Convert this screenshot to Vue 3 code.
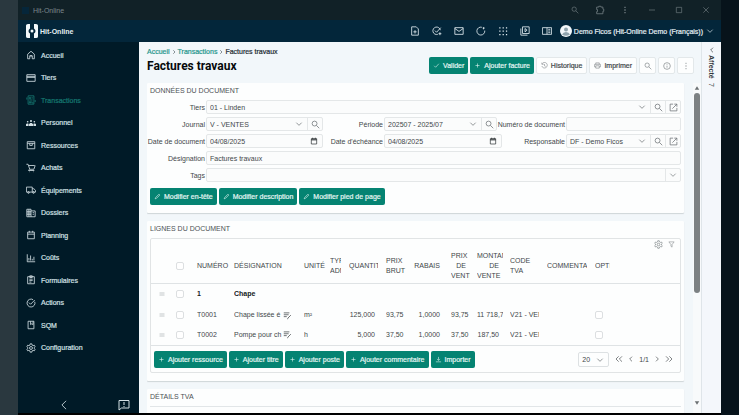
<script setup>
import { h, ref } from 'vue'

const icons = {
  home: 'M4 21V10l8-7 8 7v11h-5v-7H9v7zM9 14h6',
  card: 'M2 4h20v16H2zM2 8h20M2 10.500h20',
  receipt: 'M5 2h14v20H5zM8 6h3v3H8zM13 7h4M8 12h8M8 16h3v3H8zM14 15v4h4M2 6v5M22 12v5',
  box: 'M3 4h18v17H3zM3 8h18M9 8v5h6V8',
  cart: 'M1 3h4l4 12h10l3-9M7 6h14M8 15l-2 3h14M8 21h1M18 21h1',
  truck: 'M1 5h14v12H1zM15 9h4l4 4v4h-8M4 18a2 2 0 1 0 4 0a2 2 0 1 0-4 0M16 18a2 2 0 1 0 4 0a2 2 0 1 0-4 0',
  building: 'M2 3h10v18H2zM12 7h10v14H12M2 8h10M2 12h10M2 16h10M7 3v18M16 11h3M16 15h3',
  calendar: 'M4 5h16v16H4zM4 10h16M8 2v4M16 2v4',
  chart: 'M3 3v18h19M7 18v-6M11 18V6M15 18v-4M19 18V9',
  clipboard: 'M4 4h16v17H4zM9 2h6v4H9zM8 10h8M8 13h8M8 17h5',
  check: 'M21 9a9.500 9.500 0 1 1-4-5M7 11l4 4L21 5',
  book: 'M5 3h14v18H5zM11 3v8l3-2 3 2V3',
  gear: 'M10 2h4l.6 3 2.400 1.400 3-1 2 3.400-2.300 2v2.400l2.300 2-2 3.400-3-1-2.400 1.400-.6 3h-4l-.6-3L7 17.600l-3 1-2-3.400 2.300-2v-2.400L2 8.800l2-3.400 3 1L9.400 5zM8.500 12a3.500 3.500 0 1 0 7 0a3.500 3.500 0 1 0-7 0',
  left: 'M15 5l-7 7 7 7',
  right: 'M9 5l7 7-7 7',
  down: 'M4 8l8 8 8-8',
  back: 'M17 2L7 12l10 10',
  first: 'M11 4l-8 8 8 8M21 4l-8 8 8 8',
  last: 'M3 4l8 8-8 8M13 4l8 8-8 8',
  feedback: 'M2 3h20v15H7l-5 4zM12 6v6M12 14v2',
  search: 'M3 9.500a6.500 6.500 0 1 0 13 0a6.500 6.500 0 1 0-13 0M14.500 14.500L22 22',
  puzzle: 'M4 5h5V3h5v2h5v5h2v5h-2v6H4v-5h2v-5H4z',
  minimize: 'M3 12h18',
  maximize: 'M4 4h16v16H4z',
  close: 'M4 4l16 16M20 4L4 20',
  filePlus: 'M4 2h11l5 5v15H4zM12 10v8M8 14h8',
  taskPlus: 'M20 10a9 9 0 1 0-6 10M7 11l4 4L21 4M19 15v7M15.500 18.500h7',
  mail: 'M2 4h20v16H2zM2 6l10 7L22 6',
  refresh: 'M21 11a9.500 9.500 0 1 1-7-8M18 3v5M16 5h5',
  video: 'M6 2h16v16H6zM2 6v16h16M12 6l5 4-5 4z',
  reader: 'M1 4h22v16H1zM12 4v16M15 8h5M15 12h5M15 16h5',
  tick: 'M4 13l5 5L20 6',
  plus: 'M12 5v14M5 12h14',
  history: 'M4 6a9.500 9.500 0 1 1-1 8M3 2v6h6M12 7v6l4 2',
  printer: 'M6 8V3h12v5M6 17H2V8h20v9h-4M6 13h12v8H6z',
  info: 'M2 12a10 10 0 1 0 20 0a10 10 0 1 0-20 0M12 11v6M12 7v2',
  external: 'M11 3H3v18h18v-8M14 3h7v7M21 3L9 15',
  pencil: 'M4 20l2-5L17 4l3 3L9 18z',
  date: 'M4 5h16v16H4zM4 7h16M4 9h16M8 2v4M16 2v4',
  filter: 'M3 3h18l-7 9v9l-4-3v-6z',
  lines: 'M2 8h20M2 16h20',
  note: 'M2 5h15M2 10h13M2 15h8M12 20l9-9M12 21l2-1',
  download: 'M12 3v12M7 10l5 5 5-5M3 20h18',
}
const solids = {
  people: 'M9.500 7a2.500 2.500 0 1 0 5 0a2.500 2.500 0 1 0-5 0M2 9a2 2 0 1 0 4 0a2 2 0 1 0-4 0M18 9a2 2 0 1 0 4 0a2 2 0 1 0-4 0M7 19v-4l3-3h4l3 3v4zM0 19v-4l2-2h3l1 1v5zM24 19v-4l-2-2h-3l-1 1v5z',
  dots: 'M10 2h4v4h-4zM10 10h4v4h-4zM10 18h4v4h-4z',
  apps: 'M3 3h3v3H3zM11 3h3v3h-3zM19 3h3v3h-3zM3 11h3v3H3zM11 11h3v3h-3zM19 11h3v3h-3zM3 19h3v3H3zM11 19h3v3h-3zM19 19h3v3h-3z',
  up: 'M3 19l9-14 9 14z',
  drop: 'M3 5l9 14 9-14z',
}
const Icon = (p) =>
  h('svg', { viewBox: '0 0 24 24', class: ['icon', solids[p.name] ? 'solid' : 'line'], 'aria-hidden': 'true' }, [
    h('path', { d: solids[p.name] || icons[p.name] }),
  ])
Icon.props = ['name']

const nav = [
  ['home', 'Accueil'], ['card', 'Tiers'], ['receipt', 'Transactions'], ['people', 'Personnel'],
  ['box', 'Ressources'], ['cart', 'Achats'], ['truck', 'Équipements'], ['building', 'Dossiers'],
  ['calendar', 'Planning'], ['chart', 'Coûts'], ['clipboard', 'Formulaires'], ['check', 'Actions'],
  ['book', 'SQM'], ['gear', 'Configuration'],
]
const tools = [
  ['filePlus', 'Nouveau document'], ['taskPlus', 'Nouvelle tâche'], ['mail', 'Messages'], ['refresh', 'Actualiser'],
  ['apps', 'Applications'], ['video', 'Vidéos'], ['reader', 'Documentation'],
]
const rows = [
  { num: '1', name: 'Chape', title: true },
  { num: 'T0001', name: 'Chape lissée é', unit: 'm²', qty: '125,000', gross: '93,75', disc: '1,0000', price: '93,75', total: '11 718,7', vat: 'V21 - VENTES' },
  { num: 'T0002', name: 'Pompe pour ch', unit: 'h', qty: '5,000', gross: '37,50', disc: '1,0000', price: '37,50', total: '187,50', vat: 'V21 - VENTES' },
]
const numeric = ['qty', 'gross', 'disc', 'price', 'total']
const docDate = ref('04/08/2025')
const dueDate = ref('04/08/2025')
const designation = ref('Factures travaux')
</script>

<template>
  <div class="desktop">
    <div class="window">
      <div class="titlebar">
        <i class="favicon"></i>
        <span class="apptitle">Hit-Online</span>
        <Icon name="search" /><Icon name="puzzle" class="big" /><Icon name="dots" />
        <Icon name="minimize" class="win" /><Icon name="maximize" class="win" /><Icon name="close" class="win" />
      </div>

      <header class="topbar">
        <svg class="logo" viewBox="0 0 24 28" aria-hidden="true">
          <path d="M0 3q0-3 4-3h4v9q-3 2-3 5t3 5v9H4q-4 0-4-3zM24 3q0-3-4-3h-4v9q3 2 3 5t-3 5v9h4q4 0 4-3z" />
          <circle cx="12" cy="14" r="3" />
        </svg>
        <span class="brand">Hit-Online</span>
        <div class="tools">
          <button v-for="t in tools" :key="t[0]" type="button" :aria-label="t[1]"><Icon :name="t[0]" /></button>
        </div>
        <button type="button" class="user">
          <svg class="avatar" viewBox="0 0 24 24" aria-hidden="true">
            <circle cx="12" cy="12" r="12" fill="#f2f7fa" />
            <circle cx="12" cy="9" r="4" fill="#8fa3ad" />
            <path d="M4 19q2-5 8-5t8 5q-8 5-16 0z" fill="#8fa3ad" />
          </svg>
          <span>Demo Ficos (Hit-Online Demo (Français))</span>
          <Icon name="down" />
        </button>
      </header>

      <div class="body">
        <aside class="sidebar">
          <nav>
            <a v-for="n in nav" :key="n[1]" href="#" :class="{ active: n[0] === 'receipt' }">
              <Icon :name="n[0]" /><span>{{ n[1] }}</span>
            </a>
          </nav>
          <div class="sidefoot">
            <button type="button" aria-label="Réduire le menu"><Icon name="back" class="collapse" /></button>
            <button type="button" aria-label="Commentaires"><Icon name="feedback" /></button>
          </div>
        </aside>

        <main class="main">
          <div class="head">
            <div class="crumbs">
              <a href="#">Accueil</a><Icon name="right" /><a href="#">Transactions</a><Icon name="right" /><span>Factures travaux</span>
            </div>
            <div class="headline">
              <h1>Factures travaux</h1>
              <div class="actions">
                <button type="button" class="btn"><Icon name="tick" />Valider</button>
                <button type="button" class="btn"><Icon name="plus" />Ajouter facture</button>
                <button type="button" class="btn light"><Icon name="history" />Historique</button>
                <button type="button" class="btn light"><Icon name="printer" />Imprimer</button>
                <button type="button" class="btn light square" aria-label="Rechercher"><Icon name="search" /></button>
                <button type="button" class="btn light square" aria-label="Informations"><Icon name="info" /></button>
                <button type="button" class="btn light square more" aria-label="Plus"><Icon name="dots" /></button>
              </div>
            </div>
          </div>

          <div class="scrollarea">
            <div class="sections">
              <section class="panel">
                <h2>DONNÉES DU DOCUMENT</h2>
                <form class="form" @submit.prevent>
                  <div class="group wide">
                    <label for="tiers">Tiers</label>
                    <div class="field">
                      <div class="select"><select id="tiers"><option>01 - Linden</option></select><Icon name="down" /></div>
                      <button type="button" aria-label="Rechercher un tiers"><Icon name="search" /></button>
                      <button type="button" aria-label="Ouvrir le tiers"><Icon name="external" /></button>
                    </div>
                  </div>
                  <div class="group">
                    <label for="journal">Journal</label>
                    <div class="field">
                      <div class="select"><select id="journal"><option>V - VENTES</option></select><Icon name="down" /></div>
                      <button type="button" aria-label="Rechercher un journal"><Icon name="search" /></button>
                    </div>
                  </div>
                  <div class="group mid">
                    <label for="periode">Période</label>
                    <div class="field short">
                      <div class="select"><select id="periode"><option>202507 - 2025/07</option></select><Icon name="down" /></div>
                      <button type="button" aria-label="Rechercher une période"><Icon name="search" /></button>
                    </div>
                  </div>
                  <div class="group end">
                    <label for="numero">Numéro de document</label>
                    <div class="field"><input id="numero" type="text" /></div>
                  </div>
                  <div class="group">
                    <label for="docdate">Date de document</label>
                    <div class="field"><input id="docdate" v-model="docDate" type="text" /><Icon name="date" class="cal" /></div>
                  </div>
                  <div class="group mid">
                    <label for="duedate">Date d'échéance</label>
                    <div class="field"><input id="duedate" v-model="dueDate" type="text" /><Icon name="date" class="cal" /></div>
                  </div>
                  <div class="group end">
                    <label for="resp">Responsable</label>
                    <div class="field">
                      <div class="select"><select id="resp"><option>DF - Demo Ficos</option></select><Icon name="down" /></div>
                      <button type="button" aria-label="Rechercher un responsable"><Icon name="search" /></button>
                      <button type="button" aria-label="Ouvrir le responsable"><Icon name="external" /></button>
                    </div>
                  </div>
                  <div class="group wide">
                    <label for="designation">Désignation</label>
                    <div class="field"><input id="designation" v-model="designation" type="text" /></div>
                  </div>
                  <div class="group wide">
                    <label for="tags">Tags</label>
                    <div class="field">
                      <input id="tags" type="text" />
                      <button type="button" aria-label="Choisir des tags"><Icon name="down" class="small" /></button>
                    </div>
                  </div>
                </form>
                <div class="buttons">
                  <button type="button" class="btn"><Icon name="pencil" />Modifier en-tête</button>
                  <button type="button" class="btn"><Icon name="pencil" />Modifier description</button>
                  <button type="button" class="btn"><Icon name="pencil" />Modifier pied de page</button>
                </div>
              </section>

              <section class="panel">
                <h2>LIGNES DU DOCUMENT</h2>
                <div class="grid">
                  <div class="gridtools">
                    <button type="button" aria-label="Réglages"><Icon name="gear" /></button>
                    <button type="button" aria-label="Filtrer"><Icon name="filter" /></button>
                  </div>
                  <table>
                    <colgroup>
                      <col class="w-drag" /><col class="w-check" /><col class="w-num" /><col class="w-name" /><col class="w-unit" />
                      <col class="w-type" /><col class="w-qty" /><col class="w-gross" /><col class="w-disc" /><col class="w-price" />
                      <col class="w-total" /><col class="w-vat" /><col class="w-note" /><col class="w-opt" /><col />
                    </colgroup>
                    <thead>
                      <tr>
                        <th></th>
                        <th><input type="checkbox" aria-label="Tout sélectionner" /></th>
                        <th><div class="full">NUMÉRO</div></th>
                        <th><div>DÉSIGNATION</div></th>
                        <th><div class="full">UNITÉ</div></th>
                        <th><div>TYPE<br />ADM</div></th>
                        <th class="num"><div>QUANTITÉ</div></th>
                        <th><div class="full">PRIX<br />BRUT</div></th>
                        <th class="num"><div>RABAIS</div></th>
                        <th class="num tight"><div>PRIX<br />DE<br />VENTE</div></th>
                        <th class="num tight"><div>MONTANT<br />DE<br />VENTE</div></th>
                        <th><div>CODE<br />TVA</div></th>
                        <th><div>COMMENTAIRE</div></th>
                        <th><div>OPTION</div></th>
                        <th></th>
                      </tr>
                    </thead>
                    <tbody>
                      <tr v-for="r in rows" :key="r.num" :class="{ title: r.title }">
                        <td class="drag"><Icon name="lines" /></td>
                        <td><input type="checkbox" :aria-label="'Sélectionner ' + r.num" /></td>
                        <td><div>{{ r.num }}</div></td>
                        <td>
                          <div class="name"><span>{{ r.name }}</span><Icon v-if="!r.title" name="note" /></div>
                        </td>
                        <td><div>{{ r.unit }}</div></td>
                        <td></td>
                        <td v-for="k in numeric" :key="k" class="num tight"><div>{{ r[k] }}</div></td>
                        <td><div>{{ r.vat }}</div></td>
                        <td></td>
                        <td><input v-if="!r.title" type="checkbox" :aria-label="'Option ' + r.num" /></td>
                        <td></td>
                      </tr>
                    </tbody>
                  </table>
                  <div class="gridfoot">
                    <button type="button" class="btn"><Icon name="plus" />Ajouter ressource</button>
                    <button type="button" class="btn"><Icon name="plus" />Ajouter titre</button>
                    <button type="button" class="btn"><Icon name="plus" />Ajouter poste</button>
                    <button type="button" class="btn"><Icon name="plus" />Ajouter commentaire</button>
                    <button type="button" class="btn"><Icon name="download" />Importer</button>
                    <div class="pager">
                      <div class="select"><select aria-label="Lignes par page"><option>20</option></select><Icon name="down" /></div>
                      <button type="button" aria-label="Première page"><Icon name="first" /></button>
                      <button type="button" aria-label="Page précédente"><Icon name="left" /></button>
                      <span>1/1</span>
                      <button type="button" aria-label="Page suivante"><Icon name="right" /></button>
                      <button type="button" aria-label="Dernière page"><Icon name="last" /></button>
                    </div>
                  </div>
                </div>
              </section>

              <section class="panel last">
                <h2>DÉTAILS TVA</h2>
                <div class="rule"></div>
              </section>
            </div>
            <div class="scrollbar">
              <Icon name="up" />
              <div class="track"><div class="thumb"></div></div>
              <Icon name="drop" />
            </div>
          </div>
        </main>

        <aside class="drawer">
          <button type="button" aria-label="Ouvrir le volet"><Icon name="left" /></button>
          <strong>Affecté</strong>
          <span>7</span>
        </aside>
      </div>
    </div>
  </div>
</template>

<style>
body { margin: 0; background: #000; }
</style>

<style scoped>
* { box-sizing: border-box; }
.desktop {
  height: 100vh;
  padding: 0 18px 2px;
  background: linear-gradient(90deg, #2a383f 0, #2a383f 50%, #07131b 50%);
  font: 7px/9px "Liberation Sans", Arial, sans-serif;
  color: #42474a;
  overflow: hidden;
}
button, input, select { font: inherit; color: inherit; margin: 0; }
button { border: 0; padding: 0; background: none; display: flex; align-items: center; justify-content: center; }
a { text-decoration: none; color: inherit; }
h1, h2 { margin: 0; }
.icon { width: 8px; height: 8px; flex: none; display: block; }
.line { fill: none; stroke: currentColor; stroke-width: 2; }
.solid { fill: currentColor; }

.window { height: 100%; display: flex; flex-direction: column; box-shadow: 0 2px 0 #000; }
.titlebar { flex: 0 0 20px; background: #112127; color: #7b868b; display: flex; align-items: center; gap: 16px; padding: 0 11px 0 4px; }
.titlebar .icon { color: #707c81; }
.titlebar .big { width: 10px; height: 10px; }
.titlebar .win { margin-left: 3px; }
.favicon { width: 7px; height: 7px; background: #06263a; }
.apptitle { flex: 1; margin-left: -12px; }

.topbar { flex: 0 0 22px; background: #03263a; color: #e3edf2; display: flex; align-items: center; padding: 0 7px 0 8px; }
.logo { width: 12px; height: 14px; fill: #f4f9fb; }
.brand { flex: 1; margin-left: 2px; font-weight: bold; }
.tools { display: flex; gap: 12px; margin-right: 8px; }
.tools .icon { width: 10px; height: 10px; }
.user { gap: 2px; -webkit-text-stroke: 0.2px; }
.avatar { width: 12px; height: 12px; }
.user .icon { margin-left: 1px; }

.body { flex: 1; min-height: 0; display: flex; }
.sidebar { flex: 0 0 121px; background: #001a27; color: #d3e0e5; display: flex; flex-direction: column; padding-top: 2px; }
nav { flex: 1; display: flex; flex-direction: column; }
nav a { flex: 1; display: flex; align-items: center; gap: 5px; padding-left: 8px; -webkit-text-stroke: 0.2px; }
nav .icon { width: 10px; height: 10px; }
nav .active { color: #167a72; }
.sidefoot { flex: 0 0 54px; display: flex; align-items: flex-end; justify-content: flex-end; gap: 49px; padding: 0 9px 2px 0; }
.sidefoot .icon { width: 12px; height: 12px; }
.sidefoot .collapse { width: 10px; }

.main { flex: 1; min-width: 0; display: flex; flex-direction: column; background: #f2f7fa; padding-left: 8px; }
.head { flex: 0 0 41px; padding: 5px 7px 0 0; }
.crumbs { display: flex; align-items: center; gap: 1px; color: #1d2b33; -webkit-text-stroke: 0.2px; }
.crumbs a { color: #23958b; }
.crumbs .icon { width: 6px; height: 6px; }
.headline { display: flex; justify-content: space-between; align-items: center; height: 19px; }
h1 { font: bold 12px/16px Roboto, Arial, sans-serif; color: #06090b; }
.actions { display: flex; gap: 2px; }
.btn { height: 17px; padding: 0 4px; gap: 3px; border-radius: 2px; background: #058372; color: #e4f6f3; -webkit-text-stroke: 0.2px; white-space: nowrap; }
.btn .icon { width: 7px; height: 7px; }
.btn.light { background: #fdfefe; color: #42474a; border: 1px solid #e3e8ea; }
.btn.light .icon { color: #7c8285; }
.btn.square { width: 17px; padding: 0; }
.btn.square .icon { width: 8px; height: 8px; }
.btn.more .icon { color: #b4b9bb; }

.scrollarea { flex: 1; min-height: 0; display: flex; }
.sections { flex: 1; min-width: 0; display: flex; flex-direction: column; gap: 8px; overflow: hidden; padding-right: 8px; }
.panel { flex: none; background: #fdfefe; padding: 3px 3px 8px; box-shadow: 0 1px 1px #cfd5d8; border-radius: 1px; margin-right: 1px; }
.panel.last { flex: 1; }
h2 { font-size: 7px; line-height: 10px; font-weight: normal; color: #4c5154; }
.rule { border-top: 1px solid #e2e6e8; margin-top: 4px; }

.form { display: grid; grid-template-columns: 173fr 179fr 179fr; gap: 3px 0; margin: 4px 0 6px; }
.wide { grid-column: 1 / -1; }
.group { display: flex; align-items: center; gap: 1px; min-width: 0; }
.group label { flex: 0 0 55px; min-width: 0; display: flex; justify-content: flex-end; white-space: nowrap; }
.group.mid label { flex-basis: 60px; }
.group.end label { flex-basis: 63px; }
.field { flex: 1; min-width: 0; height: 14px; display: flex; position: relative; border: 1px solid #e4e7e8; border-radius: 2px; background: #fbfcfc; }
.field.short { margin-right: 5px; }
.field input { flex: 1; width: 0; border: 0; background: none; padding: 0 3px; outline: 0; }
.field button { flex: 0 0 15px; border-left: 1px solid #e4e7e8; color: #6c7275; }
.field button .icon { width: 9px; height: 9px; }
.field button .small { width: 8px; height: 8px; }
.select { flex: 1; min-width: 0; position: relative; display: flex; }
.select select { appearance: none; flex: 1; width: 100%; border: 0; background: none; padding: 0 14px 0 3px; outline: 0; }
.select .icon { position: absolute; right: 4px; top: 2px; color: #5d6366; pointer-events: none; }
.cal { position: absolute; right: 4px; top: 2px; color: #22282b; }
.buttons { display: flex; gap: 2px; }

.grid { border: 1px solid #e1e4e5; border-radius: 2px; margin-top: 4px; }
.gridtools { display: flex; justify-content: flex-end; align-items: center; gap: 5px; height: 11px; padding-right: 5px; color: #868c8f; }
.gridtools .icon { width: 9px; height: 9px; }
.gridtools button + button .icon { width: 7px; height: 7px; }
table { width: 100%; table-layout: fixed; border-collapse: collapse; }
th { height: 33px; padding: 0 4px; font-weight: normal; text-align: left; border-bottom: 1px solid #dfe3e5; }
td { height: 20px; padding: 0 4px; }
.tight { padding-right: 3px; }
.title td { height: 22px; font-weight: bold; color: #15191b; }
tbody { border-bottom: 1px solid #dfe3e5; }
th div, td div { overflow: hidden; white-space: nowrap; line-height: 10px; }
th .full { overflow: visible; }
.num div { padding-right: 3px; }
.num.tight div { padding-right: 4px; }
.num { text-align: right; }
.drag .icon { margin-left: 4px; width: 6px; height: 6px; color: #8b9194; }
.w-drag, .w-check { width: 21px; }
.w-num, .w-qty, .w-vat { width: 37px; }
.w-name { width: 70px; }
.w-unit, .w-price { width: 26px; }
.w-type { width: 19px; }
.w-gross { width: 27px; }
.w-disc { width: 38px; }
.w-total { width: 33px; }
.w-note { width: 48px; }
.w-opt { width: 23px; }
.name { display: flex; align-items: center; gap: 5px; }
.name span { width: 44px; }
.name .icon { width: 9px; height: 9px; }
input[type="checkbox"] { appearance: none; display: block; width: 8px; height: 8px; border: 1px solid #dcdfe1; border-radius: 2px; background: #fff; }
.gridfoot { display: flex; gap: 2px; padding: 5px 3px 4px; align-items: center; }
.pager { margin-left: auto; display: flex; align-items: center; gap: 4px; padding-right: 4px; }
.pager .select { flex: 0 0 31px; height: 15px; border: 1px solid #dde1e3; border-radius: 2px; margin-right: 2px; }
.pager .select .icon { top: 3px; }

.scrollbar { flex: 0 0 8px; display: flex; flex-direction: column; align-items: center; padding: 2px 0 7px; color: #6b7072; background: #f8fafb; }
.scrollbar .icon { width: 6px; height: 6px; }
.track { flex: 1; width: 6px; padding-top: 2px; }
.thumb { height: 65%; border-radius: 3px; background: #7c8183; }

.drawer { flex: 0 0 20px; background: #f4f7fb; border-left: 1px solid #dfe5e9; display: flex; flex-direction: column; align-items: center; padding-top: 4px; color: #32383c; }
.drawer strong, .drawer span { writing-mode: vertical-rl; }
.drawer strong { margin-top: 1px; }
.drawer span { margin-top: 4px; }
</style>
